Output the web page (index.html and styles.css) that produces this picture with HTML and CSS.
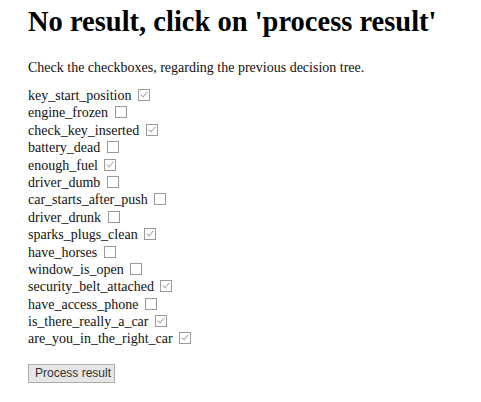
FILE: index.html
```html
<!DOCTYPE html>
<html>
<head>
<meta charset="utf-8">
<link rel="stylesheet" href="styles.css">
</head>
<body>
<div class="page">
  <h1 class="title">No result, click on 'process result'</h1>
  <p class="intro">Check the checkboxes, regarding the previous decision tree.</p>
  <div class="list">
    <div class="row">key_start_position <span class="cb on"></span></div>
    <div class="row">engine_frozen <span class="cb"></span></div>
    <div class="row">check_key_inserted <span class="cb on"></span></div>
    <div class="row">battery_dead <span class="cb"></span></div>
    <div class="row">enough_fuel <span class="cb on"></span></div>
    <div class="row">driver_dumb <span class="cb"></span></div>
    <div class="row">car_starts_after_push <span class="cb"></span></div>
    <div class="row">driver_drunk <span class="cb"></span></div>
    <div class="row">sparks_plugs_clean <span class="cb on"></span></div>
    <div class="row">have_horses <span class="cb"></span></div>
    <div class="row">window_is_open <span class="cb"></span></div>
    <div class="row">security_belt_attached <span class="cb on"></span></div>
    <div class="row">have_access_phone <span class="cb"></span></div>
    <div class="row">is_there_really_a_car <span class="cb on"></span></div>
    <div class="row">are_you_in_the_right_car <span class="cb on"></span></div>
  </div>
  <button class="btn">Process result</button>
</div>
</body>
</html>
```
FILE: styles.css
```css
html, body { margin: 0; padding: 0; background: #fff; }
.page {
  padding: 0 0 0 28px;
  font-family: "Liberation Serif", "Times New Roman", serif;
  font-size: 14px;
  color: #111;
}
.title {
  font-size: 28.5px;
  font-weight: bold;
  margin: 0;
  padding-top: 6px;
  line-height: 32px;
  color: #000;
}
.intro {
  margin: 22px 0 0 0;
  line-height: 16px;
}
.list {
  margin-top: 11px;
}
.row {
  height: 17.4px;
  line-height: 17.4px;
  white-space: nowrap;
}
.cb {
  display: inline-block;
  width: 10px;
  height: 10px;
  border: 1px solid #9a9a9a;
  background: #fff;
  vertical-align: -1px;
  margin-left: 3px;
  position: relative;
}
.cb.on::after {
  content: "";
  position: absolute;
  left: 3px;
  top: 0px;
  width: 3px;
  height: 6px;
  border-right: 1px solid #a8a8a8;
  border-bottom: 1px solid #a8a8a8;
  transform: rotate(40deg);
}
.btn {
  display: block;
  margin-top: 16px;
  font-family: "Liberation Sans", Arial, sans-serif;
  font-size: 12px;
  color: #333;
  background: #e6e6e6;
  border: 1px solid #adadad;
  padding: 0 6px;
  height: 19px;
  width: 87px;
  white-space: nowrap;
  border-radius: 0;
}
```
